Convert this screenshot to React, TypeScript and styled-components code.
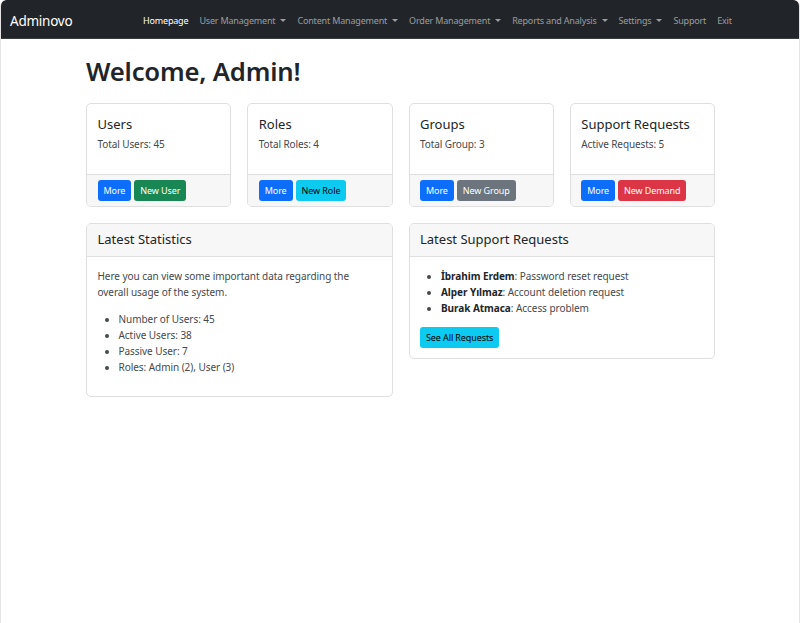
import React from 'react';
import styled, { createGlobalStyle } from 'styled-components';

const Global = createGlobalStyle`
  html, body { margin:0; padding:0; height:100%; background:#fff; }
  body { font-family:"Noto Sans","Open Sans",sans-serif; font-size:10px; line-height:16px; color:#212529; }
  #root { height:100%; }
  * { box-sizing:border-box; }
`
const Frame = styled.div`
  height:623px;
  overflow:hidden;
  border-left:1px solid #e4e4e4;
  border-right:1px solid #e4e4e4;
  border-radius:6px 6px 0 0;
  background:#fff;
`
const Navbar = styled.nav`
  height:39px;
  margin:0 -1px;
  background:#212529;
  border-bottom:1px solid #3a3d40;
  border-radius:6px 6px 0 0;
  display:flex;
  align-items:center;
  padding:3px 0 0 10px;
`
const Brand = styled.a`
  color:#fff;
  font-size:13.5px;
  letter-spacing:-.25px;
  width:133px;
`
const NavList = styled.div`
  display:flex;
  gap:11px;
`
const NavLink = styled.a<{ $active?: boolean; $caret?: boolean }>`
  color:${props => props.$active ? '#fff' : 'rgba(255,255,255,.55)'};
  font-size:9px;
  letter-spacing:-.18px;
  white-space:nowrap;
  display:flex;
  align-items:center;
  &::after{
    content:'';
    display:${props => props.$caret ? 'block' : 'none'};
    margin-left:5px;
    border-top:3px solid;
    border-left:3px solid transparent;
    border-right:3px solid transparent;
  }
`
const Container = styled.main`
  width:629px;
  margin-left:85px;
`
const Heading = styled.h1`
  margin:14px 0 12px;
  font-size:25.7px;
  line-height:38px;
  font-weight:600;
  letter-spacing:-.2px;
`
const StatRow = styled.div`
  display:grid;
  grid-template-columns:repeat(4,1fr);
  gap:16px;
`
const Card = styled.section`
  border:1px solid #dfdfdf;
  border-radius:5px;
  background:#fff;
  overflow:hidden;
`
const StatBody = styled.div`
  height:70px;
  padding:11px 10.5px 0;
`
const StatTitle = styled.h5`
  margin:0 0 3px;
  font-size:13px;
  line-height:18px;
  font-weight:400;
  color:#212529;
`
const StatText = styled.p`
  margin:0;
  font-size:10px;
  letter-spacing:-.1px;
  color:#45494e;
`
const StatFooter = styled.div`
  height:32px;
  background:#f7f7f7;
  border-top:1px solid #dfdfdf;
  padding:5px 10.5px;
  display:flex;
  gap:3px;
`
const colors: Record<string, { bg: string; fg: string }> = {
  blue: { bg:'#0d6efd', fg:'#fff' },
  green: { bg:'#198754', fg:'#fff' },
  cyan: { bg:'#0dcaf0', fg:'#000' },
  gray: { bg:'#6c757d', fg:'#fff' },
  red: { bg:'#dc3545', fg:'#fff' },
}
const Button = styled.button<{ $tone: string }>`
  height:21px;
  padding:0 6px;
  border:0;
  border-radius:3px;
  font-family:inherit;
  font-size:9px;
  letter-spacing:-.1px;
  white-space:nowrap;
  background:${props => colors[props.$tone].bg};
  color:${props => colors[props.$tone].fg};
`
const PanelRow = styled.div`
  margin-top:16px;
  display:grid;
  grid-template-columns:repeat(2,1fr);
  gap:16px;
  align-items:start;
`
const PanelHeader = styled.div`
  height:33px;
  background:#f7f7f7;
  border-bottom:1px solid #dfdfdf;
  padding:0 10.5px 3px;
  display:flex;
  align-items:center;
  font-size:13px;
`
const PanelBody = styled.div`
  padding:11px 10.5px 10px;
  font-size:10px;
  letter-spacing:-.05px;
  color:#45494e;
`
const Para = styled.p`
  margin:0 0 11px;
`
const List = styled.ul`
  margin:0 0 11px;
  padding-left:21px;
`
const Name = styled.strong`
  color:#212529;
  font-weight:700;
`

const stats = [
  { title:'Users', text:'Total Users: 45', action:'New User', tone:'green' },
  { title:'Roles', text:'Total Roles: 4', action:'New Role', tone:'cyan' },
  { title:'Groups', text:'Total Group: 3', action:'New Group', tone:'gray' },
  { title:'Support Requests', text:'Active Requests: 5', action:'New Demand', tone:'red' },
]

const App = () => {
  return (
    <Frame>
      <Global />
      <Navbar>
        <Brand>Adminovo</Brand>
        <NavList>
          <NavLink $active>Homepage</NavLink>
          <NavLink $caret>User Management</NavLink>
          <NavLink $caret>Content Management</NavLink>
          <NavLink $caret>Order Management</NavLink>
          <NavLink $caret>Reports and Analysis</NavLink>
          <NavLink $caret>Settings</NavLink>
          <NavLink>Support</NavLink>
          <NavLink>Exit</NavLink>
        </NavList>
      </Navbar>
      <Container>
        <Heading>Welcome, Admin!</Heading>
        <StatRow>
          {stats.map(s => (
            <Card key={s.title}>
              <StatBody>
                <StatTitle>{s.title}</StatTitle>
                <StatText>{s.text}</StatText>
              </StatBody>
              <StatFooter>
                <Button $tone="blue">More</Button>
                <Button $tone={s.tone}>{s.action}</Button>
              </StatFooter>
            </Card>
          ))}
        </StatRow>
        <PanelRow>
          <Card>
            <PanelHeader>Latest Statistics</PanelHeader>
            <PanelBody>
              <Para>Here you can view some important data regarding the overall usage of the system.</Para>
              <List>
                <li>Number of Users: 45</li>
                <li>Active Users: 38</li>
                <li>Passive User: 7</li>
                <li>Roles: Admin (2), User (3)</li>
              </List>
            </PanelBody>
          </Card>
          <Card>
            <PanelHeader>Latest Support Requests</PanelHeader>
            <PanelBody>
              <List>
                <li><Name>İbrahim Erdem</Name>: Password reset request</li>
                <li><Name>Alper Yılmaz</Name>: Account deletion request</li>
                <li><Name>Burak Atmaca</Name>: Access problem</li>
              </List>
              <Button $tone="cyan">See All Requests</Button>
            </PanelBody>
          </Card>
        </PanelRow>
      </Container>
    </Frame>
  )
}

export default App;
